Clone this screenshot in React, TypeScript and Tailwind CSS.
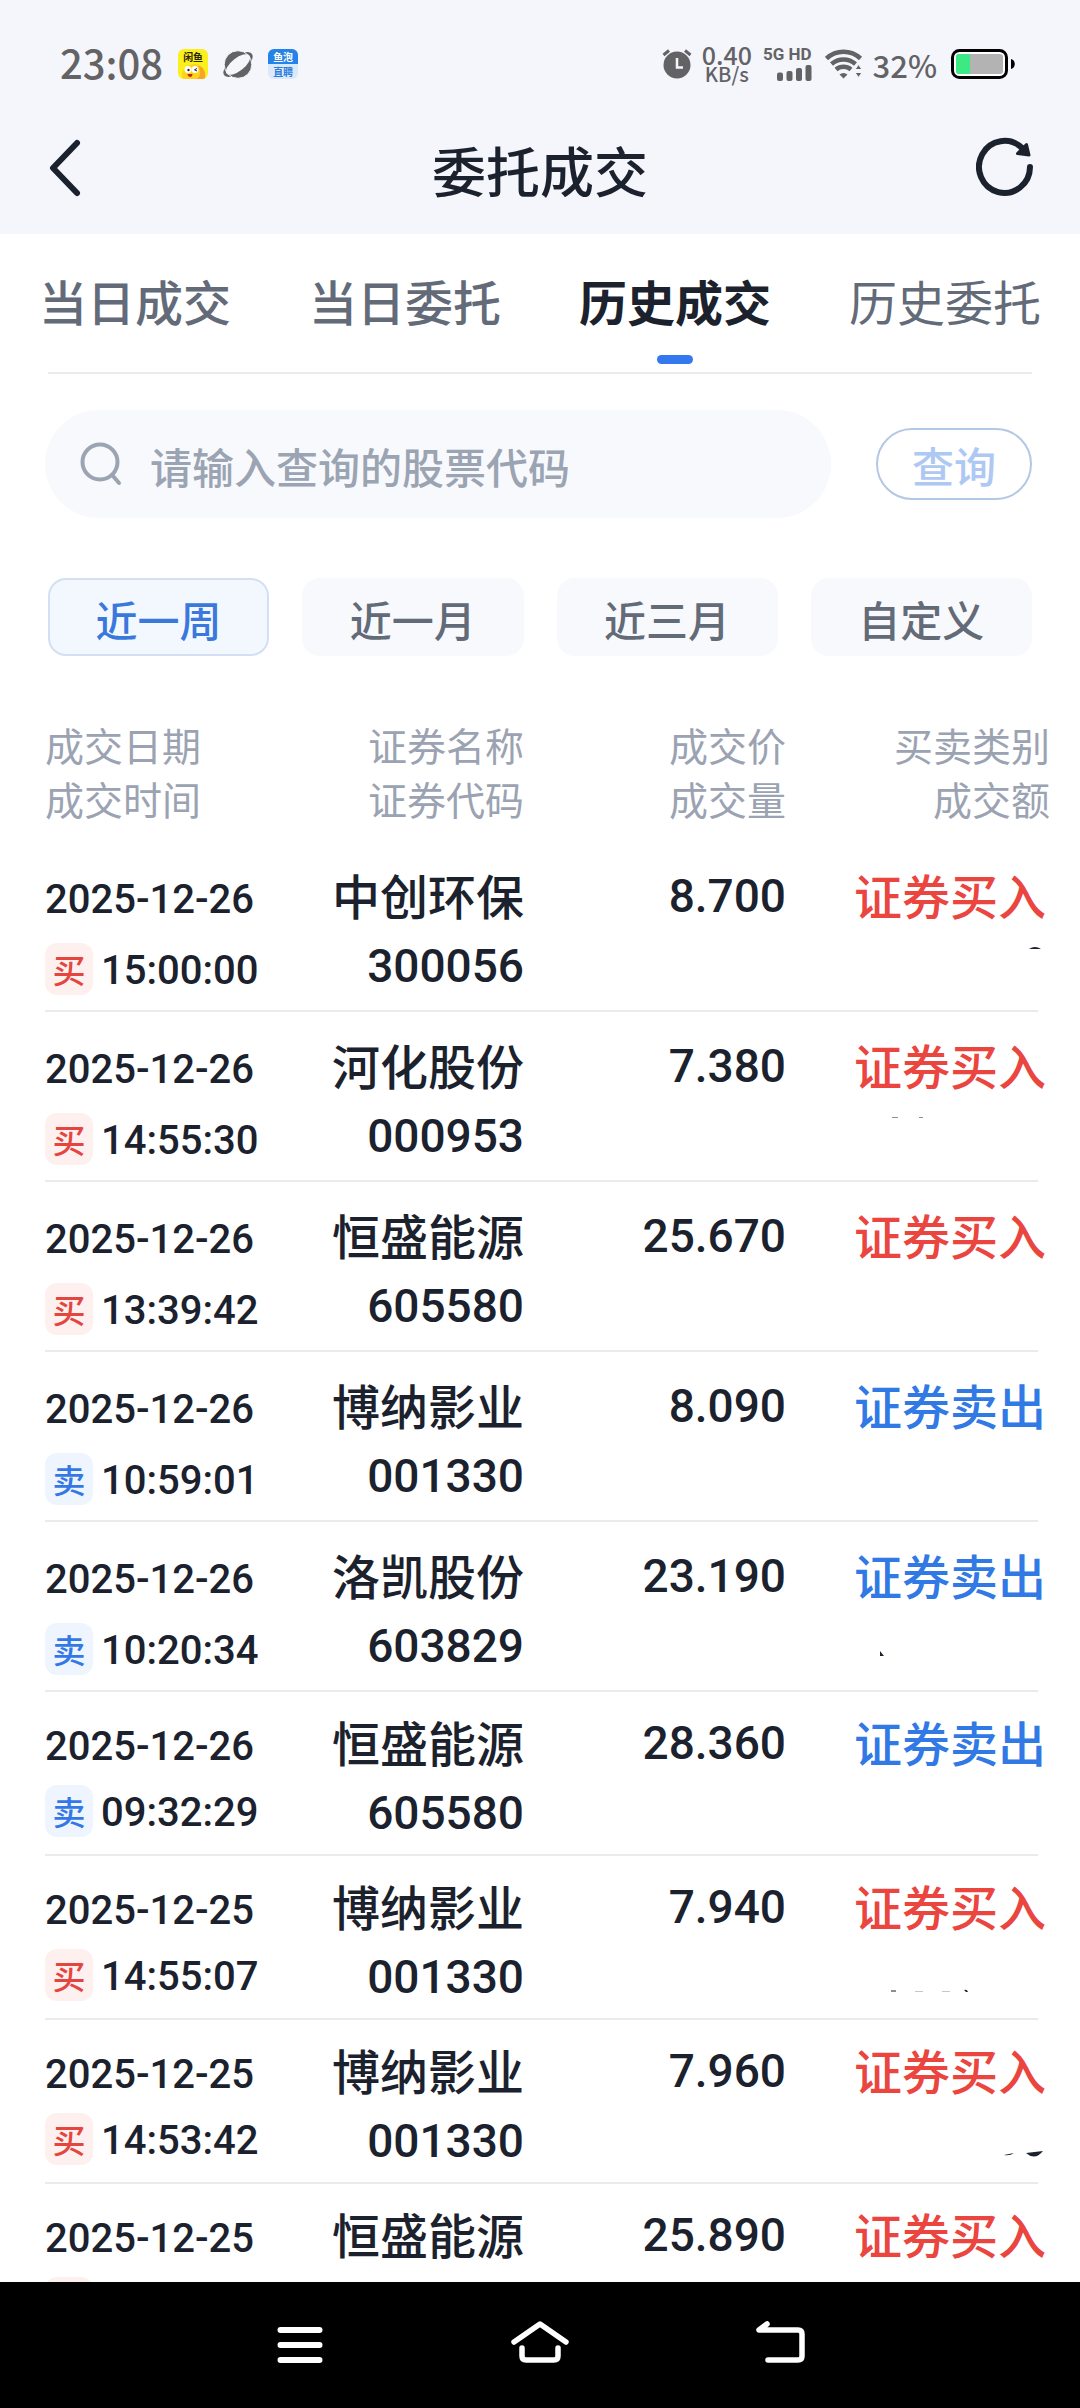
import React, { useState } from 'react';
import clsx from 'clsx';

type Side = 'buy' | 'sell';

interface Trade {
  date: string;
  time?: string;
  side: Side;
  name: string;
  code?: string;
  price: string;
  compact?: boolean;
  // Specks left in the blanked-out amount, drawn in a 188x82 box
  specks?: string;
}

const TABS = ['当日成交', '当日委托', '历史成交', '历史委托'];
const RANGES = ['近一周', '近一月', '近三月', '自定义'];

const TRADES: Trade[] = [
  { date: '2025-12-26', time: '15:00:00', side: 'buy', name: '中创环保', code: '300056', price: '8.700', specks: 'M171 24q6-4 12 0Z' },
  { date: '2025-12-26', time: '14:55:30', side: 'buy', name: '河化股份', code: '000953', price: '7.380', specks: 'M34 22.500h6v.6h-6ZM61 22.500h4v.4h-4Z' },
  { date: '2025-12-26', time: '13:39:42', side: 'buy', name: '恒盛能源', code: '605580', price: '25.670' },
  { date: '2025-12-26', time: '10:59:01', side: 'sell', name: '博纳影业', code: '001330', price: '8.090' },
  { date: '2025-12-26', time: '10:20:34', side: 'sell', name: '洛凯股份', code: '603829', price: '23.190', specks: 'M22 46l4 5h-4Z' },
  { date: '2025-12-26', time: '09:32:29', side: 'sell', name: '恒盛能源', code: '605580', price: '28.360', compact: true },
  { date: '2025-12-25', time: '14:55:07', side: 'buy', name: '博纳影业', code: '001330', price: '7.940', compact: true, specks: 'M33 54.500h5v1h-5ZM57 55h8v.3h-8ZM84 55h8v.3h-8ZM106 54q3-1 4 2h-2Z' },
  { date: '2025-12-25', time: '14:53:42', side: 'buy', name: '博纳影业', code: '001330', price: '7.960', compact: true, specks: 'M146 55l10-2q-4 3-10 2ZM168 53l17-2q-8 10-17 2Z' },
  { date: '2025-12-25', side: 'buy', name: '恒盛能源', price: '25.890', compact: true },
];

const StatusBar = () => (
  <div className="flex h-32 items-center justify-between pr-16 pl-15 text-[#636366]">
    <div className="flex items-center gap-[15px]">
      <span className="pb-1 text-[40px] leading-none font-medium">23:08</span>
      <span className="relative h-[30px] w-[30px] overflow-hidden rounded-md bg-[#fbf01e] text-center">
        <span className="block pt-px text-[10px] leading-[14px] font-bold text-[#2b2705]">闲鱼</span>
        <svg viewBox="0 0 30 15" className="absolute inset-x-0 bottom-0 h-[15px] w-[30px]">
          <path d="M5 15C3 11 4 6 8 3c5-4 14-4 17 1 2 3 2 7 2 11Z" fill="#ffd21c" />
          <path d="M20 2c6 1 8 6 7 13h-8c4-3 4-8 1-13Z" fill="#f5a623" />
          <circle cx="10" cy="5.500" r="3.500" fill="#fff" />
          <circle cx="17" cy="5.500" r="3.500" fill="#fff" />
          <circle cx="10.500" cy="6" r="1.200" fill="#222" />
          <path d="m19 4.500-2.500 1.300L19 7" fill="none" stroke="#222" />
          <path d="M9.500 10h5c0 4-4.500 4-5 0Z" fill="#c3281c" />
        </svg>
      </span>
      <svg viewBox="0 0 30 30" className="h-[30px] w-[30px]">
        <ellipse cx="15" cy="15.500" rx="17.500" ry="8" transform="rotate(-38 15 15.500)" fill="currentColor" />
        <circle cx="15" cy="15.500" r="13.800" fill="currentColor" stroke="#f4f6fb" />
        <ellipse cx="15" cy="15.500" rx="14.500" ry="6.500" transform="rotate(-38 15 15.500)" fill="#f4f6fb" />
      </svg>
      <span className="flex h-[30px] w-[30px] flex-col overflow-hidden rounded-md bg-[#dbe9fb] text-center text-[10px] leading-[15px] font-bold text-[#2a7ddb]">
        <span className="bg-[#2582e8] text-white">鱼泡</span>
        <span>直聘</span>
      </span>
    </div>

    <div className="flex items-center">
      <svg viewBox="0 0 30 30" className="mr-[10px] h-[30px] w-[30px]">
        <circle cx="15" cy="16" r="13.500" fill="currentColor" />
        <path d="M1.500 6 7 1.500M28.500 6 23 1.500" stroke="currentColor" strokeWidth="3" />
        <path d="M15 9v9.500h6" fill="none" stroke="#f4f6fb" strokeWidth="2.500" />
      </svg>
      <div className="mr-[11px] flex flex-col items-center font-medium">
        <span className="text-[25px] leading-[20px]">0.40</span>
        <span className="text-[20px] leading-[20px]">KB/s</span>
      </div>
      <div className="mr-[13px] flex flex-col items-end gap-1">
        <span className="font-[Roboto,sans-serif] text-[17px] leading-[14px] font-bold">5G HD</span>
        <svg viewBox="0 0 36 16" className="h-4 w-9" fill="currentColor">
          <rect x="1" y="7.500" width="6" height="8.500" rx="2" />
          <rect x="10.500" y="6" width="6" height="10" rx="2" />
          <rect x="20" y="3" width="6" height="13" rx="2" />
          <rect x="29.500" y="0" width="6" height="16" rx="2" />
        </svg>
      </div>
      <svg viewBox="0 0 38 30" className="mr-[10px] h-[30px] w-[38px]">
        <g fill="none" stroke="currentColor" strokeWidth="4.500">
          <path d="M1.500 9.500a25 25 0 0 1 34 0" />
          <path d="M6.500 15a18 18 0 0 1 24 0" />
          <path d="M11 20.500a11.500 11.500 0 0 1 15 0" />
        </g>
        <path d="M14.500 25.500a6 6 0 0 1 8 0l-4 4Z" fill="currentColor" />
        <path d="m33.500 15.500 3.500 5h-7ZM33.500 28.500l3.500-5h-7Z" fill="currentColor" stroke="#f4f6fb" />
      </svg>
      <span className="mr-[13px] text-[31px] leading-none font-medium">32%</span>
      <svg viewBox="0 0 66 32" className="h-8 w-[66px]">
        <rect x="2.500" y="2.500" width="54" height="27" rx="7" fill="#fff" stroke="#000" strokeWidth="3" />
        <rect x="6" y="6" width="47" height="20" rx="3" fill="#b3b3b3" />
        <path d="M9 6h11v20H9a3 3 0 0 1-3-3V9a3 3 0 0 1 3-3Z" fill="#3ce982" />
        <path d="M61 11c5 1 5 9 0 10Z" fill="#000" />
      </svg>
    </div>
  </div>
);

const TitleBar = () => (
  <header className="flex items-center justify-between px-10 pt-[3px] pb-[29px] text-[#1b222e]">
    <button type="button" aria-label="返回" className="w-16 pl-1">
      <svg viewBox="0 0 42 62" className="h-[62px] w-[42px]" fill="none" stroke="currentColor" strokeWidth="6" strokeLinecap="round" strokeLinejoin="round">
        <path d="M33 6 9 31l24 25" />
      </svg>
    </button>
    <h1 className="pt-1 text-[54px] leading-[70px] font-medium">委托成交</h1>
    <button type="button" aria-label="刷新" className="w-16">
      <svg viewBox="0 0 64 64" className="h-16 w-16" fill="none" stroke="currentColor" strokeWidth="6" strokeLinecap="round">
        <path d="M54 31A25.500 26 0 1 1 46 12" />
        <path d="M50.500 8.500 53 19l-11.500-1.500Z" fill="currentColor" strokeWidth="3" strokeLinejoin="round" />
      </svg>
    </button>
  </header>
);

const TradeRow = ({ trade }: { trade: Trade }) => {
  const buy = trade.side === 'buy';
  const cell = clsx(
    'border-b-2 border-[#ebebeb] text-right align-top',
    trade.compact ? 'pt-[18px]' : 'pt-[21px] pb-[3px]'
  );

  return (
    <tr>
      <td className="border-b-2 border-[#ebebeb] align-top font-[Roboto,sans-serif] text-[40px] font-medium">
        <div className={clsx('leading-[64px]', trade.compact ? 'pt-[23px]' : 'pt-[26px]')}>{trade.date}</div>
        <div className={clsx('flex items-center gap-2', trade.compact ? 'h-[64px]' : 'h-[74px]')}>
          <span
            className={clsx(
              "flex h-[52px] w-12 shrink-0 items-center justify-center rounded-xl font-['Noto_Sans_CJK_SC',sans-serif] text-[33px] leading-none",
              buy ? 'bg-[#fff0f0] text-[#e5453f]' : 'bg-[#eff5ff] text-[#3478e5]'
            )}
          >
            {buy ? '买' : '卖'}
          </span>
          {trade.time && <span className="pt-1">{trade.time}</span>}
        </div>
      </td>
      <td className={cell}>
        <div className="text-[48px] leading-[62px] font-medium">{trade.name}</div>
        {trade.code && <div className="font-[Roboto,sans-serif] text-[46px] leading-[82px] font-medium">{trade.code}</div>}
      </td>
      <td className={cell}>
        <div className="font-[Roboto,sans-serif] text-[46px] leading-[66px] font-medium">{trade.price}</div>
      </td>
      <td className={cell}>
        <div className="-mr-2 flex flex-col items-end">
          <span className={clsx('text-[48px] leading-[62px] font-medium whitespace-nowrap', buy ? 'text-[#ea453e]' : 'text-[#3179e4]')}>
            {buy ? '证券买入' : '证券卖出'}
          </span>
          {trade.specks && (
            <svg viewBox="0 0 188 82" className="h-[82px] w-[188px]" fill="currentColor">
              <path d={trade.specks} />
            </svg>
          )}
        </div>
      </td>
    </tr>
  );
};

const NavBar = () => (
  <nav className="flex h-[126px] shrink-0 items-center justify-center gap-[180px] bg-black text-white">
    <button type="button" aria-label="最近任务">
      <svg viewBox="0 0 60 48" className="h-12 w-15" stroke="currentColor" strokeWidth="6" strokeLinecap="round">
        <path d="M10.500 9h39M10.500 24h39M10.500 39h39" />
      </svg>
    </button>
    <button type="button" aria-label="主屏幕">
      <svg viewBox="0 0 60 48" className="h-12 w-15" fill="none" stroke="currentColor" strokeWidth="5.500" strokeLinecap="round" strokeLinejoin="round">
        <path d="M4 21 30 3l26 18" />
        <path d="M12 27v8q0 4 4 4h28q4 0 4-4v-8" />
      </svg>
    </button>
    <button type="button" aria-label="返回上一级">
      <svg viewBox="0 0 60 48" className="h-12 w-15" fill="none" stroke="currentColor" strokeWidth="5.500" strokeLinecap="round" strokeLinejoin="round">
        <path d="M17 3 9 9h39q4 0 4 4v22q0 4-4 4H18" />
      </svg>
    </button>
  </nav>
);

const App: React.FC = () => {
  const [tab, setTab] = useState(2);
  const [range, setRange] = useState(0);
  const [keyword, setKeyword] = useState('');

  return (
    <div className="flex h-screen flex-col overflow-hidden bg-white font-['Noto_Sans_CJK_SC',sans-serif] text-[#1b222e]">
      <div className="shrink-0 bg-[#f4f6fb]">
        <StatusBar />
        <TitleBar />
      </div>

      <main className="min-h-0 flex-1 overflow-hidden">
        <div className="grid grid-cols-4">
          {TABS.map((label, i) => (
            <button
              key={label}
              type="button"
              onClick={() => setTab(i)}
              className={clsx(
                'flex flex-col items-center pt-8 pb-2 text-[48px] leading-[68px]',
                i === tab ? 'font-bold' : 'text-[#636a78]',
                i < tab && 'font-medium'
              )}
            >
              {label}
              <span className={clsx('mt-[21px] h-[9px] w-9 rounded-full', i === tab && 'bg-[#3478f0]')} />
            </button>
          ))}
        </div>

        <div className="mx-12 border-t-2 border-[#ebebeb]" />

        <form className="mt-9 flex items-center gap-[45px] pr-12 pl-[45px]" onSubmit={e => e.preventDefault()}>
          <label className="flex h-[108px] min-w-0 flex-1 items-center gap-[26px] rounded-full bg-[#f8f9fc] px-[35px]">
            <svg viewBox="0 0 44 44" className="h-11 w-11 shrink-0" fill="none" stroke="#9ba4b3" strokeWidth="4" strokeLinecap="round">
              <circle cx="20" cy="20" r="17.500" />
              <path d="m33 34 6 7" />
            </svg>
            <input
              type="text"
              aria-label="股票代码"
              value={keyword}
              onChange={e => setKeyword(e.target.value)}
              placeholder="请输入查询的股票代码"
              className="w-full min-w-0 bg-transparent pt-0.5 text-[42px] font-medium outline-none placeholder:text-[#9ba4b3]"
            />
          </label>
          <button type="submit" className="h-[72px] w-[156px] shrink-0 rounded-full border-2 border-[#b3c8e6] pt-0.5 text-[42px] leading-[66px] font-medium text-[#aec8f4]">
            查询
          </button>
        </form>

        <div className="mt-[60px] grid grid-cols-4 gap-[33px] px-12">
          {RANGES.map((label, i) => (
            <button
              key={label}
              type="button"
              onClick={() => setRange(i)}
              className={clsx(
                'h-[78px] rounded-[18px] border-2 pt-1 text-[42px] leading-[70px] font-medium',
                i === range ? 'border-[#d3e0f3] bg-[#f3f8ff] text-[#3a78dc]' : 'border-[#f8f9fc] bg-[#f8f9fc] text-[#636a78]'
              )}
            >
              {label}
            </button>
          ))}
        </div>

        <div className="mt-[61px] pr-[42px] pl-[45px]">
          <table className="w-full table-fixed border-separate border-spacing-0">
            <colgroup>
              <col />
              <col className="w-[262px]" />
              <col className="w-[262px]" />
              <col className="w-[252px]" />
            </colgroup>
            <thead>
              <tr className="text-right text-[39px] leading-[54px] text-[#9ba3b2]">
                <th scope="col" className="pb-[17px] text-left font-normal">成交日期<br />成交时间</th>
                <th scope="col" className="pb-[17px] font-normal">证券名称<br />证券代码</th>
                <th scope="col" className="pb-[17px] font-normal">成交价<br />成交量</th>
                <th scope="col" className="pb-[17px] font-normal">
                  <div className="-mr-3">买卖类别<br />成交额</div>
                </th>
              </tr>
            </thead>
            <tbody>
              {TRADES.map(trade => (
                <TradeRow key={trade.date + trade.price} trade={trade} />
              ))}
            </tbody>
          </table>
        </div>
      </main>

      <NavBar />
    </div>
  );
};

export default App;
